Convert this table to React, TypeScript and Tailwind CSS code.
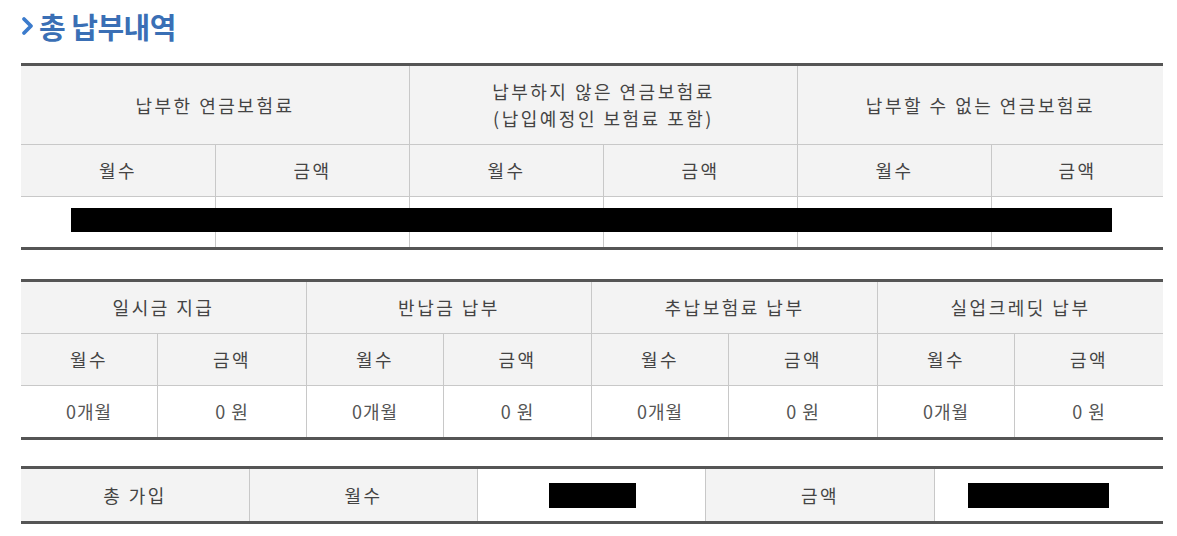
import React from "react";

const font = { fontFamily: '"Noto Sans CJK KR", "Noto Sans", sans-serif' };

const th = "flex items-center justify-center bg-[#f3f3f3] text-[#444] text-[18px] tracking-[2.5px]";
const td = "flex items-center justify-center bg-white text-[#555] text-[18px] tracking-[1px]";

const Chevron = () => (
  <svg width="13" height="20" viewBox="0 0 13 20" className="mr-[5px]">
    <polyline points="3,3 10,10 3,17" fill="none" stroke="#3b7bcc" strokeWidth="3.8" strokeLinecap="round" strokeLinejoin="round" />
  </svg>
);

const App = () => {
  const groups2 = ["일시금 지급", "반납금 납부", "추납보험료 납부", "실업크레딧 납부"];

  return (
    <div className="bg-white w-[1177px] h-[536px] pl-[21px]" style={font}>
      {/* title */}
      <div className="flex items-center h-[50px] pt-[2px]">
        <Chevron />
        <h2 className="text-[29px] leading-none font-bold text-[#3a6fb5] tracking-[-0.5px]">총 납부내역</h2>
      </div>

      {/* table 1 */}
      <div className="mt-[13px] w-[1142px] border-y-[3px] border-[#555] relative">
        <div className="grid grid-cols-[194px_194px_194px_194px_194px_172px]">
          <div className={`${th} col-span-2 h-[79px] border-b border-[#c8c8c8]`}>납부한 연금보험료</div>
          <div className={`${th} col-span-2 h-[79px] border-b border-l border-[#c8c8c8] flex-col leading-[27px]`}>
            <span>납부하지 않은 연금보험료</span>
            <span>(납입예정인 보험료 포함)</span>
          </div>
          <div className={`${th} col-span-2 h-[79px] border-b border-l border-[#c8c8c8]`}>납부할 수 없는 연금보험료</div>
          {[0, 1, 2, 3, 4, 5].map((i) => (
            <div key={i} className={`${th} h-[52px] border-b border-[#c8c8c8] ${i > 0 ? "border-l" : ""}`}>
              {i % 2 === 0 ? "월수" : "금액"}
            </div>
          ))}
          {[0, 1, 2, 3, 4, 5].map((i) => (
            <div key={i} className={`${td} h-[50px] border-[#c8c8c8] ${i > 0 ? "border-l" : ""}`}></div>
          ))}
        </div>
        {/* redacted */}
        <div className="absolute left-[50px] top-[142px] w-[1041px] h-[24px] bg-black" />
      </div>

      {/* table 2 */}
      <div className="mt-[29px] w-[1142px] border-y-[3px] border-[#555]">
        <div className="grid grid-cols-[136px_149px_137px_148px_137px_149px_137px_149px]">
          {groups2.map((g, i) => (
            <div key={g} className={`${th} col-span-2 h-[52px] border-b border-[#c8c8c8] ${i > 0 ? "border-l" : ""}`}>{g}</div>
          ))}
          {[0, 1, 2, 3, 4, 5, 6, 7].map((i) => (
            <div key={i} className={`${th} h-[52px] border-b border-[#c8c8c8] ${i > 0 ? "border-l" : ""}`}>
              {i % 2 === 0 ? "월수" : "금액"}
            </div>
          ))}
          {[0, 1, 2, 3, 4, 5, 6, 7].map((i) => (
            <div key={i} className={`${td} h-[51px] border-[#c8c8c8] ${i > 0 ? "border-l" : ""}`}>
              {i % 2 === 0 ? "0개월" : "0 원"}
            </div>
          ))}
        </div>
      </div>

      {/* table 3 */}
      <div className="mt-[26px] w-[1142px] border-y-[3px] border-[#555]">
        <div className="grid grid-cols-[228px_228px_228px_229px_229px] h-[52px]">
          <div className={th}>총 가입</div>
          <div className={`${th} border-l border-[#c8c8c8]`}>월수</div>
          <div className={`${td} border-l border-[#c8c8c8]`}>
            <div className="w-[87px] h-[25px] bg-black ml-[2px]" />
          </div>
          <div className={`${th} border-l border-[#c8c8c8]`}>금액</div>
          <div className={`${td} justify-start pl-[33px] border-l border-[#c8c8c8]`}>
            <div className="w-[141px] h-[25px] bg-black" />
          </div>
        </div>
      </div>
    </div>
  );
};

export default App;
